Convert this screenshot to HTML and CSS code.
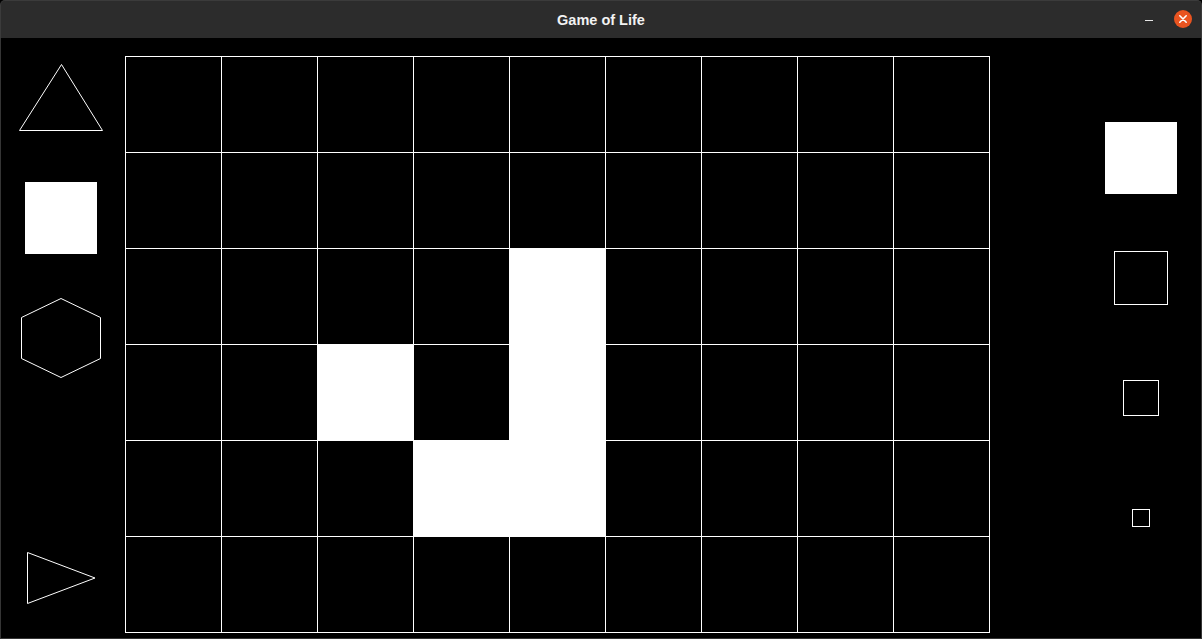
FILE: index.html
```html
<!DOCTYPE html>
<html lang="en">
<head>
<meta charset="utf-8">
<title>Game of Life</title>
<link rel="stylesheet" href="styles.css">
</head>
<body>
<div class="window">
  <header class="titlebar">
    <span class="title">Game of Life</span>
    <div class="controls">
      <span class="minimize"></span>
      <span class="close">
        <svg width="18" height="18" viewBox="0 0 18 18"><path d="M5.8 5.8 L12.2 12.2 M12.2 5.8 L5.8 12.2" stroke="#fff" stroke-width="1.6" stroke-linecap="round"/></svg>
      </span>
    </div>
  </header>
  <main class="content">
    <aside class="left-tools">
      <svg class="tool tool-tri" width="124" height="68" viewBox="1 64 124 68"><polygon points="61.5,64.5 19.5,130.5 102.5,130.5" fill="none" stroke="#fff" stroke-width="1"/></svg>
      <svg class="tool tool-square" width="124" height="72" viewBox="1 182 124 72"><rect x="25" y="182" width="72" height="72" fill="#fff"/></svg>
      <svg class="tool tool-hex" width="124" height="80" viewBox="1 298 124 80"><polygon points="61,298.5 100.5,317.5 100.5,358.5 61,377.5 21.5,358.5 21.5,317.5" fill="none" stroke="#fff" stroke-width="1"/></svg>
      <svg class="tool tool-play" width="124" height="52" viewBox="1 552 124 52"><polygon points="27.5,552.5 27.5,603.5 95,578" fill="none" stroke="#fff" stroke-width="1"/></svg>
    </aside>
    <section class="board">
      <div class="cell"></div><div class="cell"></div><div class="cell"></div><div class="cell"></div><div class="cell"></div><div class="cell"></div><div class="cell"></div><div class="cell"></div><div class="cell"></div>
      <div class="cell"></div><div class="cell"></div><div class="cell"></div><div class="cell"></div><div class="cell"></div><div class="cell"></div><div class="cell"></div><div class="cell"></div><div class="cell"></div>
      <div class="cell"></div><div class="cell"></div><div class="cell"></div><div class="cell"></div><div class="cell alive"></div><div class="cell"></div><div class="cell"></div><div class="cell"></div><div class="cell"></div>
      <div class="cell"></div><div class="cell"></div><div class="cell alive"></div><div class="cell"></div><div class="cell alive"></div><div class="cell"></div><div class="cell"></div><div class="cell"></div><div class="cell"></div>
      <div class="cell"></div><div class="cell"></div><div class="cell"></div><div class="cell alive"></div><div class="cell alive"></div><div class="cell"></div><div class="cell"></div><div class="cell"></div><div class="cell"></div>
      <div class="cell"></div><div class="cell"></div><div class="cell"></div><div class="cell"></div><div class="cell"></div><div class="cell"></div><div class="cell"></div><div class="cell"></div><div class="cell"></div>
    </section>
    <aside class="right-tools">
      <div class="slot"><span class="size size-72"></span></div>
      <div class="slot"><span class="size size-54"></span></div>
      <div class="slot"><span class="size size-36"></span></div>
      <div class="slot"><span class="size size-18"></span></div>
    </aside>
  </main>
</div>
</body>
</html>
```

FILE: styles.css
```css
* { box-sizing: border-box; }

html, body {
  margin: 0;
  padding: 0;
  background: #000;
}

.window {
  width: 1202px;
  height: 639px;
  display: flex;
  flex-direction: column;
  background: #000;
  overflow: hidden;
}

.titlebar {
  height: 38px;
  flex: none;
  background: #2c2c2c;
  border-top: 1px solid #3b3b3b;
  border-left: 1px solid #3b3b3b;
  border-right: 1px solid #3b3b3b;
  border-radius: 5px 5px 0 0;
  display: flex;
  align-items: center;
  justify-content: center;
  position: relative;
}

.title {
  font-family: "Liberation Sans", Arial, sans-serif;
  font-weight: bold;
  font-size: 14.5px;
  color: #f2f2f2;
  margin-top: 1px;
}

.controls {
  position: absolute;
  right: 9px;
  top: 9px;
  display: flex;
  align-items: center;
  gap: 21px;
}

.minimize {
  width: 8px;
  height: 1px;
  background: #e6e6e6;
  margin-top: 3px;
}

.close {
  width: 18px;
  height: 18px;
  border-radius: 50%;
  background: #e95420;
  display: block;
}

.close svg { display: block; }

.content {
  flex: 1;
  display: flex;
  border-left: 1px solid #353535;
  border-right: 1px solid #353535;
  border-bottom: 1px solid #353535;
}

.left-tools {
  width: 124px;
  flex: none;
  display: flex;
  flex-direction: column;
}

.tool { display: block; flex: none; }
.tool-tri { margin-top: 26px; }
.tool-square { margin-top: 50px; }
.tool-hex { margin-top: 44px; }
.tool-play { margin-top: 174px; }

.board {
  margin-top: 18px;
  width: 865px;
  height: 577px;
  flex: none;
  display: grid;
  grid-template-columns: repeat(9, 96px);
  grid-template-rows: repeat(6, 96px);
  border-right: 1px solid #fff;
  border-bottom: 1px solid #fff;
}

.cell {
  border-left: 1px solid #fff;
  border-top: 1px solid #fff;
  background: #000;
}

.cell.alive { background: #fff; }

.right-tools {
  flex: 1;
  padding-top: 60px;
  padding-left: 115px;
  display: flex;
  flex-direction: column;
}

.slot {
  width: 72px;
  height: 120px;
  display: flex;
  align-items: center;
  justify-content: center;
}

.size { display: block; }
.size-72 { width: 72px; height: 72px; background: #fff; }
.size-54 { width: 54px; height: 54px; border: 1px solid #fff; }
.size-36 { width: 36px; height: 36px; border: 1px solid #fff; }
.size-18 { width: 18px; height: 18px; border: 1px solid #fff; }
```
